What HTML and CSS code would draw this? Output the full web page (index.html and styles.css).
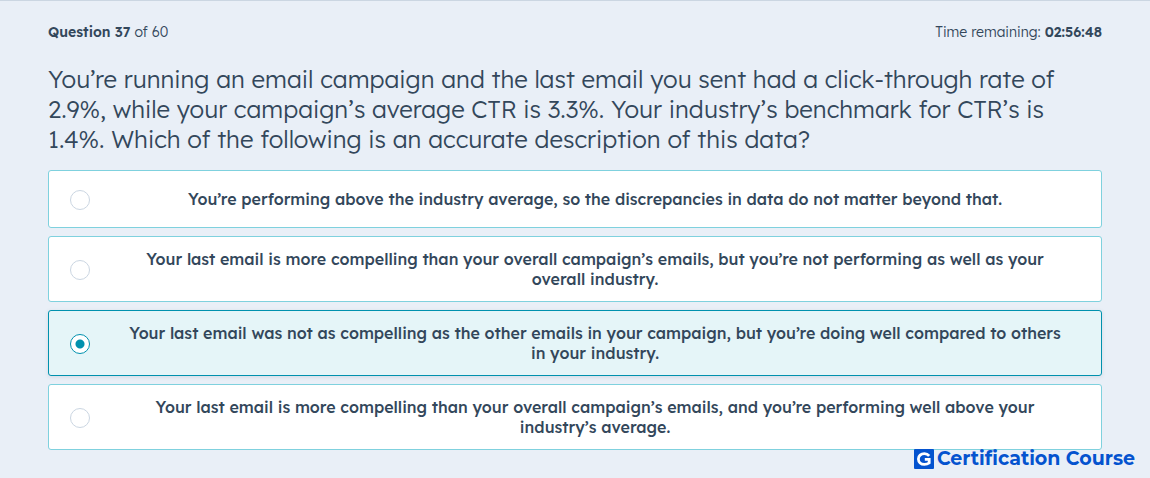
FILE: index.html
```html
<!DOCTYPE html>
<html lang="en">
<head>
    <meta charset="UTF-8">
    <meta name="viewport" content="width=device-width, initial-scale=1.0">
    <title>Certification Exam</title>
    <link rel="stylesheet" href="styles.css">
</head>
<body>
    <main class="exam">
        <header class="exam-header">
            <div class="progress"><strong>Question 37</strong> of 60</div>
            <div class="timer">Time remaining: <strong>02:56:48</strong></div>
        </header>

        <form>
            <fieldset class="question">
                <legend>You’re running an email campaign and the last email you sent had a click-through rate of 2.9%, while your campaign’s average CTR is 3.3%. Your industry’s benchmark for CTR’s is 1.4%. Which of the following is an accurate description of this data?</legend>
                <label class="answer">
                    <input type="radio" name="answer" value="1">
                    <span>You’re performing above the industry average, so the discrepancies in data do not matter beyond that.</span>
                </label>
                <label class="answer">
                    <input type="radio" name="answer" value="2">
                    <span>Your last email is more compelling than your overall campaign’s emails, but you’re not performing as well as your overall industry.</span>
                </label>
                <label class="answer">
                    <input type="radio" name="answer" value="3" checked>
                    <span>Your last email was not as compelling as the other emails in your campaign, but you’re doing well compared to others in your industry.</span>
                </label>
                <label class="answer">
                    <input type="radio" name="answer" value="4">
                    <span>Your last email is more compelling than your overall campaign’s emails, and you’re performing well above your industry’s average.</span>
                </label>
            </fieldset>
        </form>
    </main>

    <div class="brand">
        <svg class="brand-logo" viewBox="0 0 20 20" aria-hidden="true">
            <rect width="20" height="20" rx="1" fill="#0453cf"/>
            <path d="M15.2 6.8C14 5.4 12.4 4.6 10.4 4.6C6.9 4.6 4.4 6.9 4.4 10S6.9 15.4 10.4 15.4C12.2 15.4 13.9 14.9 15.2 13.9V10.4H10.8" fill="none" stroke="#fff" stroke-width="2.8"/>
        </svg>
        <span>Certification Course</span>
    </div>
</body>
</html>
```

FILE: styles.css
```css
* {
    box-sizing: border-box;
}

body {
    margin: 0;
    font-family: Lexend, Inter, sans-serif;
    color: #33475b;
    background-color: #e9eff7;
    border-top: 1px solid #cbd6e2;
}

.exam {
    padding: 20px 48px 28px;
}

.exam-header {
    display: flex;
    justify-content: space-between;
    font-size: 14px;
    font-weight: 300;
    line-height: 22px;
}

.exam-header strong {
    font-weight: 600;
}

.question {
    display: flex;
    flex-direction: column;
    gap: 8px;
    margin: 0;
    padding: 0;
    border: 0;
    min-width: 0;
}

.question legend {
    padding: 21px 0 16px;
    font-size: 24px;
    font-weight: 300;
    line-height: 30px;
}

.answer {
    display: flex;
    align-items: center;
    min-height: 58px;
    padding: 12px 21px;
    border: 1px solid #7fd1de;
    border-radius: 3px;
    background-color: #fff;
    font-size: 16px;
    font-weight: 500;
    line-height: 20px;
    cursor: pointer;
}

.answer span {
    flex: 1;
    padding: 0 16px 0 36px;
    text-align: center;
}

.answer input {
    appearance: none;
    flex: none;
    width: 20px;
    height: 20px;
    margin: 2px 0 0;
    border: 1px solid #cbd6e2;
    border-radius: 50%;
    background-color: #fff;
}

.answer:has(input:checked) {
    border-color: #0091ae;
    background-color: #e5f5f8;
    box-shadow: 0 1px 4px rgba(51, 71, 91, 0.12);
}

.answer input:checked {
    border-color: #0091ae;
    background-image: radial-gradient(circle, #0091ae 4px, transparent 5px);
}

/* Watermark over the bottom right corner */
.brand {
    position: absolute;
    right: 15px;
    bottom: 9px;
    display: flex;
    align-items: center;
    gap: 3px;
    color: #0453cf;
    font-family: Montserrat, "Open Sans", sans-serif;
    font-size: 19px;
    font-weight: 700;
    line-height: 20px;
}

.brand-logo {
    width: 20px;
    height: 20px;
}
```
